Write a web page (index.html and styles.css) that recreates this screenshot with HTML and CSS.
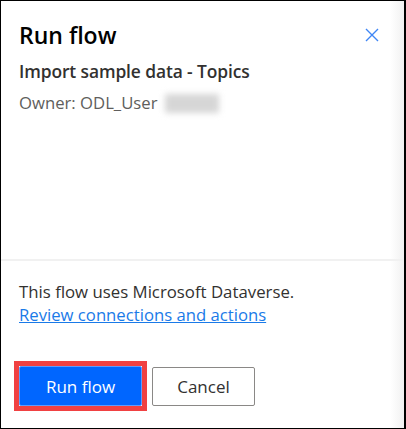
FILE: index.html
```html
<!DOCTYPE html>
<html>
<head>
<meta charset="utf-8">
<link rel="stylesheet" href="styles.css">
</head>
<body>
<div class="panel">
  <div class="top">
    <div class="head">
      <h1 class="title">Run flow</h1>
      <button class="close" aria-label="Close">
        <svg width="14" height="14" viewBox="0 0 14 14"><path d="M1 1 L13 13 M13 1 L1 13" stroke="#3f86f5" stroke-width="1.4" fill="none"/></svg>
      </button>
    </div>
    <div class="name">Import sample data - Topics</div>
    <div class="owner">Owner: ODL_User<span class="blur"></span></div>
  </div>
  <div class="sep"></div>
  <div class="bottom">
    <p class="info">This flow uses Microsoft Dataverse.</p>
    <a class="link" href="#">Review connections and actions</a>
    <div class="actions">
      <div class="highlight"><button class="btn primary">Run flow</button></div>
      <button class="btn secondary">Cancel</button>
    </div>
  </div>
</div>
</body>
</html>
```
FILE: styles.css
```css
* { box-sizing: border-box; }
html, body { margin: 0; padding: 0; }
body {
  font-family: "Open Sans", "Noto Sans", sans-serif;
  width: 406px;
  height: 429px;
}
.panel {
  width: 406px;
  height: 429px;
  border-top: 1px solid #000;
  border-left: 1px solid #000;
  border-bottom: 1px solid #000;
  border-right: 2px solid #000;
  background: linear-gradient(to right, #fff calc(100% - 14px), #f1f1f1);
  display: flex;
  flex-direction: column;
}
.top {
  height: 258px;
  padding: 16px 0 0 18px;
}
.head {
  display: flex;
  align-items: center;
  justify-content: space-between;
  padding-right: 25px;
}
.title {
  margin: 0;
  font-size: 23px;
  font-weight: 600;
  color: #000;
  line-height: 36px;
}
.close {
  border: 0;
  background: none;
  padding: 0;
  width: 14px;
  height: 14px;
  display: flex;
}
.name {
  margin-top: 8px;
  font-size: 17.4px;
  font-weight: 600;
  color: #323130;
  line-height: 20px;
  letter-spacing: -0.1px;
}
.owner {
  margin-top: 12px;
  font-size: 16.7px;
  color: #605e5c;
  line-height: 20px;
  display: flex;
  align-items: center;
}
.blur {
  display: inline-block;
  width: 54px;
  height: 19px;
  margin-left: 8px;
  background: #d6d6d6;
  filter: blur(3px);
}
.sep {
  height: 2px;
  background: #f1f1f1;
}
.bottom {
  padding: 20px 0 0 18px;
}
.info {
  margin: 0;
  font-size: 16.8px;
  color: #323130;
  line-height: 22px;
}
.link {
  display: block;
  font-size: 16.7px;
  color: #1a7ae8;
  line-height: 23px;
  text-decoration: underline;
  width: max-content;
}
.actions {
  margin-top: 35px;
  display: flex;
  align-items: center;
  gap: 5px;
  margin-left: -5px;
}
.highlight {
  border: 5px solid #f04142;
  display: flex;
}
.btn {
  font-family: inherit;
  font-size: 17px;
  height: 40px;
  border-radius: 2px;
  cursor: pointer;
}
.primary {
  width: 123px;
  background: #0066ff;
  color: #fff;
  border: 1px solid #5c9cff;
}
.secondary {
  width: 103px;
  height: 39px;
  background: #fff;
  color: #323130;
  border: 1px solid #8a8886;
}
```
